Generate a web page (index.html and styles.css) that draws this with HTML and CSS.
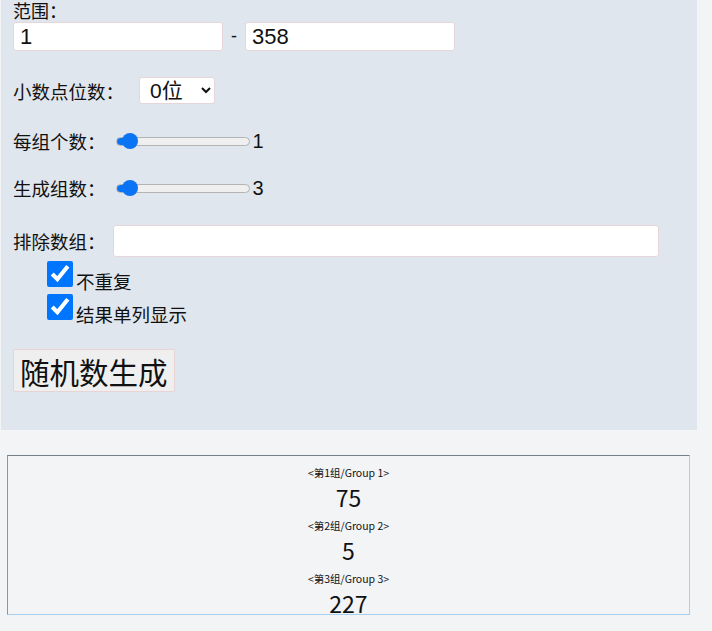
FILE: index.html
```html
<!DOCTYPE html>
<html>
<head>
    <meta charset="utf-8">
    <title>随机数生成</title>
    <link rel="stylesheet" href="styles.css">
</head>
<body>
    <form id="mainForm" class="panel">
        <div class="caption">范围：</div>
        <div class="range">
            <input type="text" class="textbox" value="1">
            <span class="dash">-</span>
            <input type="text" class="textbox" value="358">
        </div>

        <div class="row row-decimal">
            <span class="label">小数点位数：</span>
            <select class="border">
                <option>0位</option>
                <option>1位</option>
                <option>2位</option>
            </select>
        </div>

        <div class="row row-slider">
            <span class="label">每组个数：</span>
            <input type="range" min="1" max="100" value="1">
            <span class="value">1</span>
        </div>

        <div class="row row-slider row-slider2">
            <span class="label">生成组数：</span>
            <input type="range" min="3" max="100" value="3">
            <span class="value">3</span>
        </div>

        <div class="row row-exclude">
            <span class="label">排除数组：</span>
            <input type="text" class="textbox wide">
        </div>

        <label class="check check1"><input type="checkbox" checked><span>不重复</span></label>
        <label class="check check2"><input type="checkbox" checked><span>结果单列显示</span></label>

        <button type="button" class="go">随机数生成</button>
    </form>

    <div class="result">
        <div class="group">&lt;第1组/Group 1&gt;</div>
        <div class="num">75</div>
        <div class="group">&lt;第2组/Group 2&gt;</div>
        <div class="num">5</div>
        <div class="group">&lt;第3组/Group 3&gt;</div>
        <div class="num">227</div>
    </div>
</body>
</html>
```

FILE: styles.css
```css
body
{
    margin: 0;
    background: #f3f4f6;
    font-family: "Noto Sans CJK SC", "Liberation Sans", sans-serif;
    color: #111;
}
.panel
{
    display: block;
    width: 672px;
    height: 430px;
    margin: 0 0 0 1px;
    padding: 0 12px;
    background: #e0e6ee;
    font-size: 19px;
}
.caption
{
    height: 21px;
    line-height: 21px;
    font-size: 18px;
}
.range
{
    display: flex;
    align-items: center;
    margin-top: 1px;
    height: 29px;
}
.dash
{
    width: 22px;
    text-align: center;
    font-family: "Liberation Sans", sans-serif;
    font-size: 18px;
}
.textbox
{
    box-sizing: border-box;
    height: 29px;
    width: 209px;
    margin: 0;
    padding: 0 0 0 6px;
    border: 1px solid #e6d6d8;
    border-radius: 3px;
    background: #fff;
    font-family: "Liberation Sans", sans-serif;
    font-size: 22px;
    color: #111;
}
.range .textbox
{
    width: 210px;
}
.textbox.wide
{
    width: 546px;
    height: 32px;
}
.row
{
    display: flex;
    align-items: center;
}
.label
{
    font-size: 18.5px;
    white-space: nowrap;
}
.row-decimal
{
    margin-top: 26px;
    height: 27px;
}
.border
{
    box-sizing: border-box;
    width: 76px;
    height: 27px;
    margin: 0 0 0 15px;
    padding: 0 0 0 6px;
    border: 1px solid #e6d6d8;
    border-radius: 3px;
    background: #fff;
    font-family: "Liberation Sans", "Noto Sans CJK SC", sans-serif;
    font-size: 21px;
    color: #111;
}
.row-slider
{
    margin-top: 25px;
    height: 24px;
}
.row-slider2
{
    margin-top: 23px;
}
.row-slider input[type="range"]
{
    -webkit-appearance: none;
    appearance: none;
    box-sizing: border-box;
    width: 134px;
    height: 9px;
    margin: 0 0 0 10px;
    padding: 0 0 0 5px;
    border: 1px solid #b4b4b4;
    border-radius: 5px;
    background: linear-gradient(to right, #0a74f5 0, #0a74f5 12px, #efefef 12px);
}
.row-slider input[type="range"]::-webkit-slider-thumb
{
    -webkit-appearance: none;
    width: 16px;
    height: 16px;
    border-radius: 50%;
    background: #0a74f5;
}
.value
{
    margin-left: 3px;
    font-family: "Liberation Sans", sans-serif;
    font-size: 20px;
}
.row-exclude
{
    margin-top: 25px;
    height: 32px;
}
.row-exclude .textbox
{
    margin-left: 7px;
}
.check
{
    display: flex;
    align-items: flex-end;
    margin-left: 34px;
    font-size: 18.5px;
    line-height: 22px;
}
.check input
{
    width: 26px;
    height: 26px;
    margin: 0 3px 0 0;
    accent-color: #0075ff;
}
.check span
{
    margin-bottom: -5px;
}
.check1
{
    margin-top: 4px;
}
.check2
{
    margin-top: 7px;
}
.go
{
    display: block;
    height: 43px;
    margin: 29px 0 0 0;
    padding: 0 6px;
    border: 1px solid #e8d4d4;
    border-radius: 2px;
    background: #efefef;
    font-family: "Noto Sans CJK SC", sans-serif;
    font-size: 29.5px;
    line-height: 40px;
    color: #111;
}
.result
{
    box-sizing: border-box;
    width: 683px;
    height: 160px;
    margin: 25px 0 0 7px;
    padding-top: 9px;
    overflow: hidden;
    border: 1px solid;
    border-color: #76808a #a6d0ee #a6d0ee #8d959d;
    text-align: center;
}
.group
{
    height: 16px;
    line-height: 16px;
    font-size: 10.5px;
}
.num
{
    height: 32px;
    line-height: 32px;
    margin-bottom: 5px;
    font-size: 23px;
}
```
